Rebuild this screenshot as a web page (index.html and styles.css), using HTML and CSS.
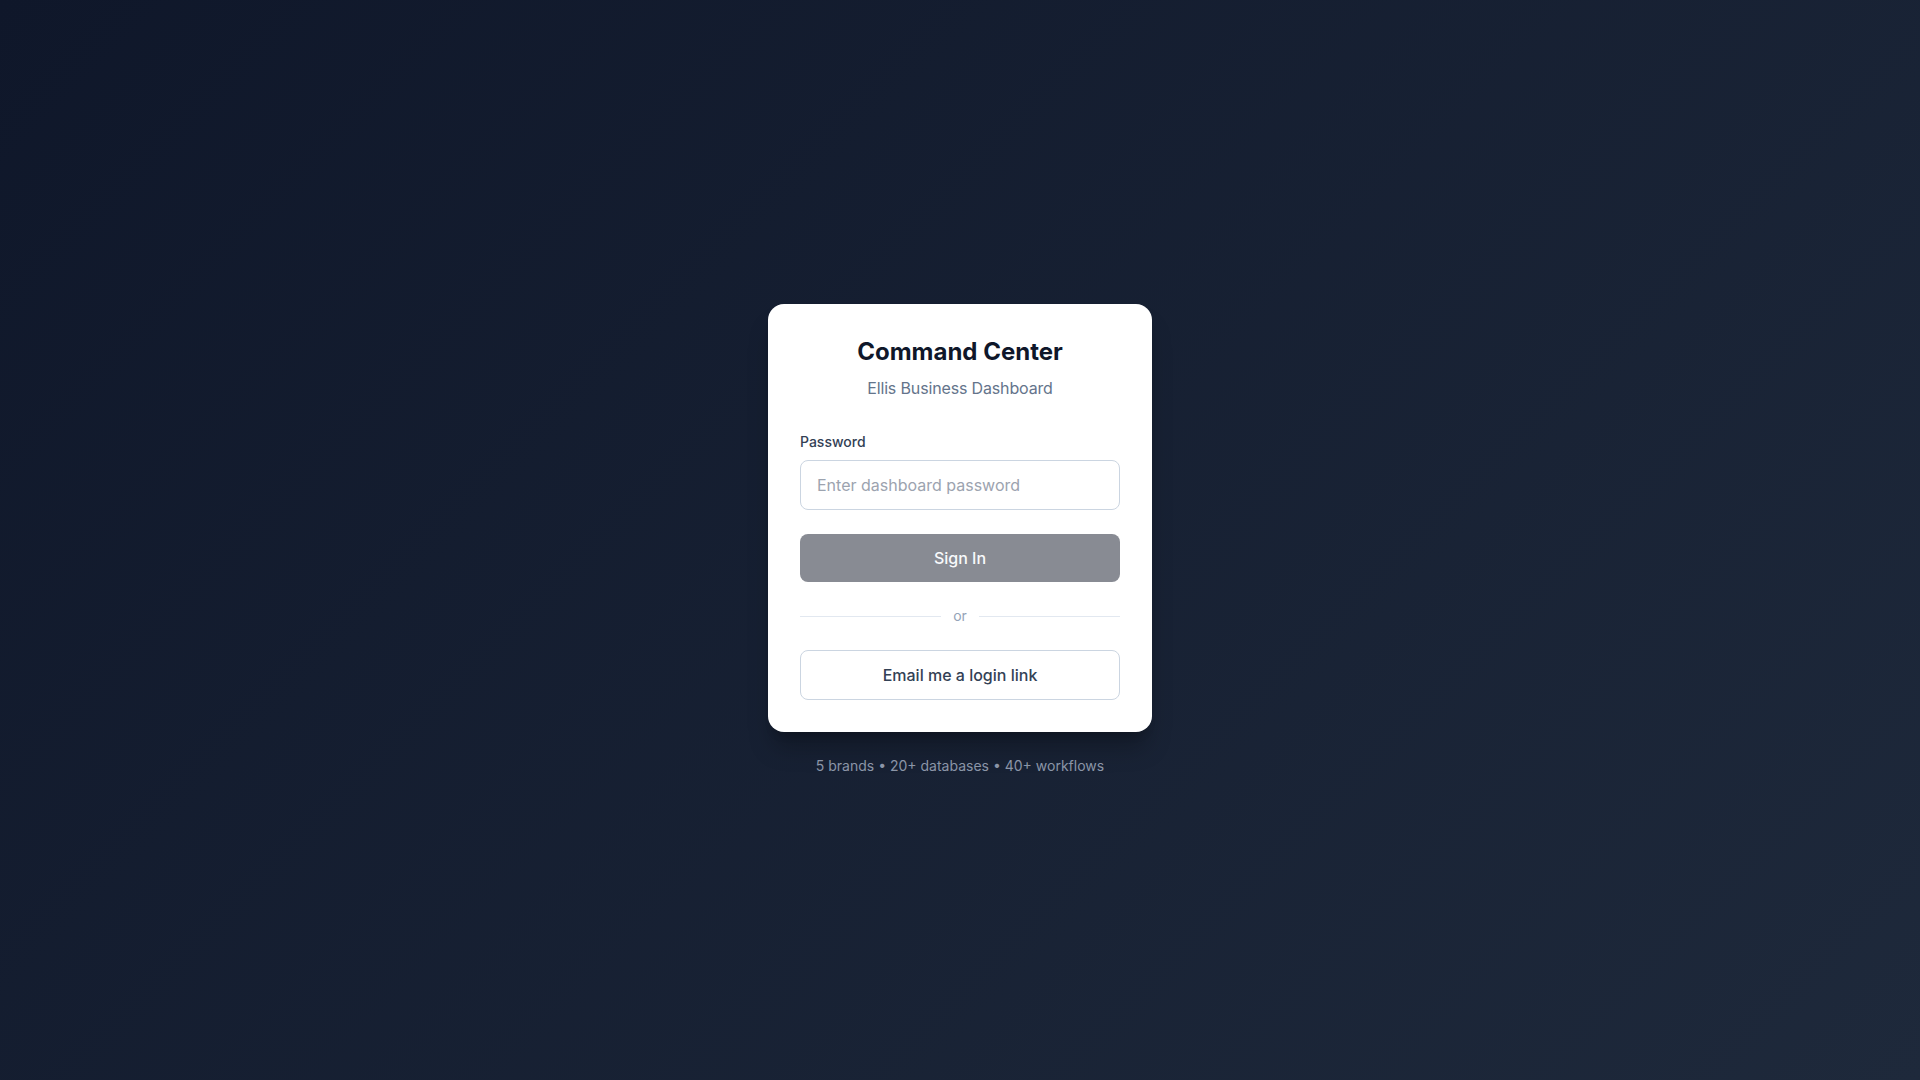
FILE: index.html
```html
<!DOCTYPE html>
<html lang="en">
<head>
<meta charset="utf-8">
<title>Command Center</title>
<link rel="stylesheet" href="styles.css">
</head>
<body>
<main class="page">
  <div class="wrap">
    <section class="card">
      <h1 class="title">Command Center</h1>
      <p class="subtitle">Ellis Business Dashboard</p>
      <form class="form">
        <label class="label" for="pw">Password</label>
        <input id="pw" class="input" type="password" placeholder="Enter dashboard password">
        <button type="button" class="btn-primary">Sign In</button>
      </form>
      <div class="divider"><span class="line"></span><span class="or">or</span><span class="line"></span></div>
      <button type="button" class="btn-secondary">Email me a login link</button>
    </section>
    <p class="footer">5 brands • 20+ databases • 40+ workflows</p>
  </div>
</main>
</body>
</html>
```

FILE: styles.css
```css
* { box-sizing: border-box; }
html, body { margin: 0; padding: 0; height: 100%; }
body {
  font-family: Inter, "Noto Sans", "Liberation Sans", sans-serif;
  background: linear-gradient(135deg, #0f172a 0%, #1e293b 100%);
  min-height: 100vh;
}
.page {
  min-height: 100vh;
  display: flex;
  align-items: center;
  justify-content: center;
}
.wrap {
  width: 384px;
  display: flex;
  flex-direction: column;
}
.card {
  background: #ffffff;
  border-radius: 16px;
  padding: 32px;
  box-shadow: 0 20px 25px -5px rgba(0,0,0,0.25), 0 8px 10px -6px rgba(0,0,0,0.2);
  display: flex;
  flex-direction: column;
}
.title {
  margin: 0;
  text-align: center;
  font-size: 24px;
  line-height: 32px;
  font-weight: 700;
  color: #0f172a;
}
.subtitle {
  margin: 8px 0 0;
  text-align: center;
  font-size: 16px;
  line-height: 24px;
  letter-spacing: -0.15px;
  color: #64748b;
}
.form {
  margin-top: 32px;
  display: flex;
  flex-direction: column;
}
.label {
  font-size: 14px;
  line-height: 20px;
  font-weight: 500;
  color: #334155;
}
.input {
  margin-top: 8px;
  height: 50px;
  border: 1px solid #cbd5e1;
  border-radius: 8px;
  padding: 12px 16px;
  font-family: inherit;
  font-size: 16px;
  line-height: 24px;
  color: #0f172a;
  outline: none;
}
.input::placeholder { color: #9ca3af; }
.btn-primary {
  margin-top: 24px;
  height: 48px;
  border: none;
  border-radius: 8px;
  background: #888b93;
  color: #f8fafc;
  font-family: inherit;
  font-size: 16px;
  line-height: 24px;
  font-weight: 500;
}
.divider {
  margin: 24px 0;
  height: 20px;
  display: flex;
  align-items: center;
}
.line {
  flex: 1;
  height: 1px;
  background: #e2e8f0;
}
.or {
  padding: 0 12px;
  font-size: 14px;
  line-height: 20px;
  color: #94a3b8;
}
.btn-secondary {
  height: 50px;
  border: 1px solid #cbd5e1;
  border-radius: 8px;
  background: #ffffff;
  color: #334155;
  font-family: inherit;
  font-size: 16px;
  line-height: 24px;
  font-weight: 500;
}
.footer {
  margin: 24px 0 0;
  text-align: center;
  font-size: 14px;
  line-height: 20px;
  color: #8b95a7;
}
```
